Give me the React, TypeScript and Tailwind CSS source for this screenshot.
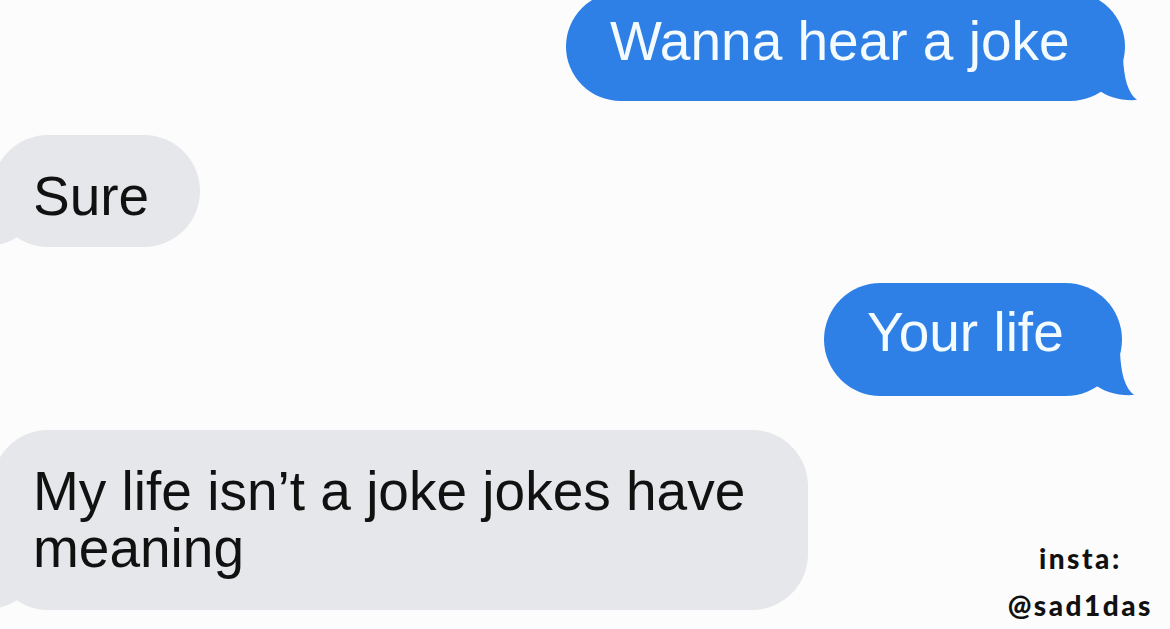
import React from 'react';

const BLUE = '#2f80e6';
const GRAY = '#e6e7ea';

// message tail, drawn for a bubble on the right; mirrored for the left side
const Tail = ({ side, color }: { side: 'left' | 'right'; color: string }) => (
  <svg
    width="56"
    height="44"
    viewBox="0 0 56 44"
    className={
      side === 'right'
        ? 'absolute bottom-0 right-[-12px]'
        : 'absolute bottom-0 left-[-12px] -scale-x-100'
    }
  >
    <path
      d="M0 40 C8 40 13 36 16 32 C26 40 40 44 56 43 C47 36 43 22 42 0 H0 Z"
      fill={color}
    />
  </svg>
);

const App = () => {
  return (
    <div className="w-[1170px] h-[629px] overflow-hidden bg-[#fcfcfc] font-['Liberation_Sans',Arial,sans-serif] flex flex-col">
      {/* Wanna hear a joke */}
      <div className="flex justify-end pr-[45px] -mt-[8px]">
        <div className="relative w-[559px] h-[109px] rounded-[56px] bg-[#2f80e6] flex items-center pl-[44px] pb-[10px]">
          <span className="text-[55px] leading-none text-[#f3fbff] whitespace-nowrap">Wanna hear a joke</span>
          <Tail side="right" color={BLUE} />
        </div>
      </div>

      {/* Sure */}
      <div className="flex mt-[34px] -ml-[8px]">
        <div className="relative w-[208px] h-[112px] rounded-[56px] bg-[#e6e7ea] flex items-center pl-[41px] pt-[10px]">
          <span className="text-[55px] leading-none text-[#111]">Sure</span>
          <Tail side="left" color={GRAY} />
        </div>
      </div>

      {/* Your life */}
      <div className="flex justify-end pr-[48px] mt-[36px]">
        <div className="relative w-[298px] h-[113px] rounded-[57px] bg-[#2f80e6] flex items-center pl-[43px] pb-[14px]">
          <span className="text-[55px] leading-none text-[#f3fbff] whitespace-nowrap">Your life</span>
          <Tail side="right" color={BLUE} />
        </div>
      </div>

      {/* My life isn't a joke */}
      <div className="flex mt-[34px] -ml-[8px]">
        <div className="relative w-[816px] h-[180px] rounded-[56px] bg-[#e6e7ea] pl-[41px] pr-[40px] pt-[33px]">
          <p className="text-[55px] leading-[57px] text-[#111]">My life isn’t a joke jokes have meaning</p>
          <Tail side="left" color={GRAY} />
        </div>
        <div className="ml-auto mr-[17px] mt-[105px] flex flex-col items-center font-['Lato',sans-serif] font-black text-[#111] text-[28px] leading-[47px] tracking-[2.5px]">
          <span>insta:</span>
          <span>@sad1das</span>
        </div>
      </div>
    </div>
  );
};

export default App;
